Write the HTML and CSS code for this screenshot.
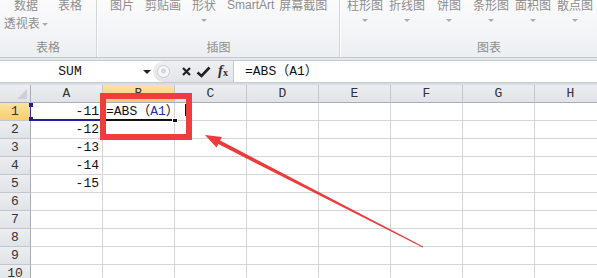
FILE: index.html
```html
<!DOCTYPE html>
<html lang="zh-CN">
<head>
	<meta charset="utf-8">
	<title>ABS</title>
	<link rel="stylesheet" href="styles.css">
</head>
<body>
	<!-- ribbon -->
	<div class="ribbon">
		<div class="group g1">
			<div class="btns">
				<div class="btn w48"><span>数据</span><span class="sub">透视表 <i class="drop"></i></span></div>
				<div class="btn"><span>表格</span></div>
			</div>
			<div class="glabel">表格</div>
		</div>
		<div class="group g2">
			<div class="btns">
				<div class="btn"><span>图片</span></div>
				<div class="btn"><span>剪贴画</span></div>
				<div class="btn"><span>形状</span><i class="drop"></i></div>
				<div class="btn"><span class="latin">SmartArt</span></div>
				<div class="btn"><span>屏幕截图</span></div>
			</div>
			<div class="glabel">插图</div>
		</div>
		<div class="group g3">
			<div class="btns">
				<div class="btn"><span>柱形图</span><i class="drop"></i></div>
				<div class="btn"><span>折线图</span><i class="drop"></i></div>
				<div class="btn"><span>饼图</span><i class="drop"></i></div>
				<div class="btn"><span>条形图</span><i class="drop"></i></div>
				<div class="btn"><span>面积图</span><i class="drop"></i></div>
				<div class="btn"><span>散点图</span><i class="drop"></i></div>
			</div>
			<div class="glabel">图表</div>
		</div>
	</div>
	<div class="strip"></div>

	<!-- formula bar -->
	<div class="fbar">
		<div class="namebox">SUM</div>
		<div class="nb-drop"><i></i></div>
		<div class="fx-tools">
			<span class="knob"></span>
			<svg class="ic-x" width="9" height="9" viewBox="0 0 9 9"><path d="M1 1L8 8M8 1L1 8" stroke="#222" stroke-width="2.2"/></svg>
			<svg class="ic-ok" width="15" height="12" viewBox="0 0 15 12"><path d="M1.5 6.5L5.5 10L13.5 1.5" fill="none" stroke="#222" stroke-width="2.6"/></svg>
			<span class="fx"><i>f</i><sub>x</sub></span>
		</div>
		<div class="finput">=ABS（A1）</div>
	</div>
	<div class="gap"></div>

	<!-- sheet -->
	<div class="sheet">
		<div class="c corner"></div><div class="c ch">A</div><div class="c ch on">B</div><div class="c ch">C</div><div class="c ch">D</div><div class="c ch">E</div><div class="c ch">F</div><div class="c ch">G</div><div class="c ch">H</div>

		<div class="c rh on">1</div><div class="c num ref-cell">-11<i class="h h-top"></i><i class="h h-bot"></i></div><div class="c edit">=ABS（<span class="ref">A1</span>）<span class="caret"></span><i class="fill"></i></div><div class="c"></div><div class="c"></div><div class="c"></div><div class="c"></div><div class="c"></div><div class="c"></div>
		<div class="c rh">2</div><div class="c num">-12</div><div class="c"></div><div class="c"></div><div class="c"></div><div class="c"></div><div class="c"></div><div class="c"></div><div class="c"></div>
		<div class="c rh">3</div><div class="c num">-13</div><div class="c"></div><div class="c"></div><div class="c"></div><div class="c"></div><div class="c"></div><div class="c"></div><div class="c"></div>
		<div class="c rh">4</div><div class="c num">-14</div><div class="c"></div><div class="c"></div><div class="c"></div><div class="c"></div><div class="c"></div><div class="c"></div><div class="c"></div>
		<div class="c rh">5</div><div class="c num">-15</div><div class="c"></div><div class="c"></div><div class="c"></div><div class="c"></div><div class="c"></div><div class="c"></div><div class="c"></div>
		<div class="c rh">6</div><div class="c"></div><div class="c"></div><div class="c"></div><div class="c"></div><div class="c"></div><div class="c"></div><div class="c"></div><div class="c"></div>
		<div class="c rh">7</div><div class="c"></div><div class="c"></div><div class="c"></div><div class="c"></div><div class="c"></div><div class="c"></div><div class="c"></div><div class="c"></div>
		<div class="c rh">8</div><div class="c"></div><div class="c"></div><div class="c"></div><div class="c"></div><div class="c"></div><div class="c"></div><div class="c"></div><div class="c"></div>
		<div class="c rh">9</div><div class="c"></div><div class="c"></div><div class="c"></div><div class="c"></div><div class="c"></div><div class="c"></div><div class="c"></div><div class="c"></div>
		<div class="c rh">10</div><div class="c"></div><div class="c"></div><div class="c"></div><div class="c"></div><div class="c"></div><div class="c"></div><div class="c"></div><div class="c"></div>
	</div>

	<!-- annotation -->
	<div class="mark"></div>
	<svg class="arrow" width="597" height="278" viewBox="0 0 597 278">
		<polygon points="205,135 216.5,147.6 218.3,144.1 422.8,247.4 423.2,246.6 220.1,140.5 221.9,137" fill="#ee3a3a"/>
	</svg>
</body>
</html>
```
FILE: styles.css
```css
*{
	margin: 0;
	padding: 0;
	box-sizing: border-box;
}
body{
	width: 597px;
	height: 278px;
	overflow: hidden;
	position: relative;
	background: #fff;
	font-family: "Noto Sans CJK SC", sans-serif;
}
/*功能区*/
.ribbon{
	display: flex;
	height: 58px;
	overflow: hidden;
	background: linear-gradient(#fbfbfc, #f3f4f6 60%, #eceef1);
	border-bottom: 1px solid #c3c7cc;
	color: #8e8e8e;
	font-size: 12px;
	line-height: 14px;
}
.group{
	display: flex;
	flex-direction: column;
	flex: none;
}
.g1{
	width: 97px;
	border-right: 1px solid #d2d5da;
}
.g2{
	width: 243px;
	border-left: 1px solid #fff;
	border-right: 1px solid #d2d5da;
}
.g3{
	width: 297px;
	border-left: 1px solid #fff;
}
.btns{
	display: flex;
	height: 42px;
	margin-top: -2px;
}
.g1 .btns{
	padding-left: 2px;
	gap: 2px;
}
.g2 .btns{
	padding-left: 6px;
	gap: 5px;
}
.g3 .btns{
	padding-left: 6px;
	gap: 6px;
}
.btn{
	display: flex;
	flex-direction: column;
	align-items: center;
	min-width: 36px;
	white-space: nowrap;
}
.w48{
	width: 48px;
}
.btn .sub{
	margin-top: 4px;
}
.latin{
	font-family: "Liberation Sans", sans-serif;
}
.drop{
	display: inline-block;
	width: 0;
	height: 0;
	margin-top: 7px;
	border-left: 3px solid transparent;
	border-right: 3px solid transparent;
	border-top: 3px solid #a9abae;
	vertical-align: middle;
}
.sub .drop{
	margin-top: 0;
}
.glabel{
	text-align: center;
}
.strip{
	height: 2px;
	background: #e4e7eb;
}
/*编辑栏*/
.fbar{
	display: flex;
	height: 23px;
	border-top: 1px solid #c5c9ce;
	border-bottom: 1px solid #c5c9ce;
	background: #fff;
	font-family: "Liberation Mono", "Noto Sans CJK SC", monospace;
	font-size: 13px;
	line-height: 21px;
	color: #111;
}
.namebox{
	width: 140px;
	text-align: center;
}
.nb-drop{
	width: 13px;
	display: flex;
	align-items: center;
	justify-content: center;
}
.nb-drop i{
	border-left: 4px solid transparent;
	border-right: 4px solid transparent;
	border-top: 4px solid #222;
}
.fx-tools{
	display: flex;
	align-items: center;
	width: 81px;
	padding-left: 4px;
	background: linear-gradient(#eff0f2, #e2e4e7);
	border-right: 1px solid #c5c9ce;
	border-radius: 11px 0 0 11px;
}
.knob{
	width: 13px;
	height: 13px;
	border-radius: 50%;
	border: 1px solid #c9ccd0;
	background: radial-gradient(circle at 50% 45%, #d4d6d9 0 2px, #f6f6f7 3px);
}
.ic-x{
	margin-left: 12px;
}
.ic-ok{
	margin-left: 5px;
}
.fx{
	margin-left: 7px;
	font-family: "Liberation Serif", serif;
	font-size: 15px;
	font-weight: bold;
	color: #333;
}
.fx sub{
	font-size: 10px;
	vertical-align: -1px;
}
.finput{
	flex: 1;
	padding-left: 11px;
}
.gap{
	height: 2px;
	background: #d9dde2;
}
/*表格区*/
.sheet{
	display: grid;
	grid-template-columns: 31px repeat(8, 72px);
	grid-auto-rows: 18px;
	font-family: "Liberation Mono", "Noto Sans CJK SC", monospace;
	font-size: 13px;
	line-height: 17px;
	color: #111;
}
.c{
	border-right: 1px solid #d5d5d5;
	border-bottom: 1px solid #d5d5d5;
	white-space: nowrap;
}
.ch, .rh, .corner{
	background: linear-gradient(#eceef1, #e0e3e7);
	border-color: #c3c7cc;
	text-align: center;
	color: #333;
}
.ch{
	border-bottom-color: #a9aeb4;
}
.rh{
	border-right-color: #a9aeb4;
}
.corner{
	position: relative;
	border-bottom-color: #a9aeb4;
	border-right-color: #a9aeb4;
}
.corner::after{
	content: "";
	position: absolute;
	right: 3px;
	bottom: 3px;
	border-left: 10px solid transparent;
	border-bottom: 10px solid #cdd1d5;
}
.ch.on, .rh.on{
	background: linear-gradient(#fbe3a2, #f6cd72);
}
.num{
	text-align: right;
	padding-right: 3px;
}
/*被引用的A1*/
.ref-cell{
	position: relative;
	border-left: 1px solid #2a2aa8;
	margin-left: -1px;
	border-bottom: 2px solid #1f1f9c;
}
.h{
	position: absolute;
	left: -2px;
	width: 4px;
	height: 4px;
	background: #1f1f9c;
}
.h-top{
	top: 0;
}
.h-bot{
	bottom: -2px;
}
/*编辑中的B1*/
.edit{
	position: relative;
	z-index: 1;
	padding-left: 3px;
	overflow: visible;
	border-bottom: 2px solid #111;
}
.ref{
	color: #1f2fb0;
}
.caret{
	display: inline-block;
	width: 1px;
	height: 12px;
	margin-left: 6px;
	background: #111;
	vertical-align: -1px;
}
.fill{
	position: absolute;
	right: -4px;
	bottom: -4px;
	width: 6px;
	height: 5px;
	background: #111;
	border: 1px solid #fff;
}
/*标注*/
.mark{
	position: absolute;
	left: 100px;
	top: 93px;
	width: 92px;
	height: 47px;
	border: 6px solid #f03c3c;
	z-index: 2;
}
.arrow{
	position: absolute;
	left: 0;
	top: 0;
	z-index: 2;
}
```
